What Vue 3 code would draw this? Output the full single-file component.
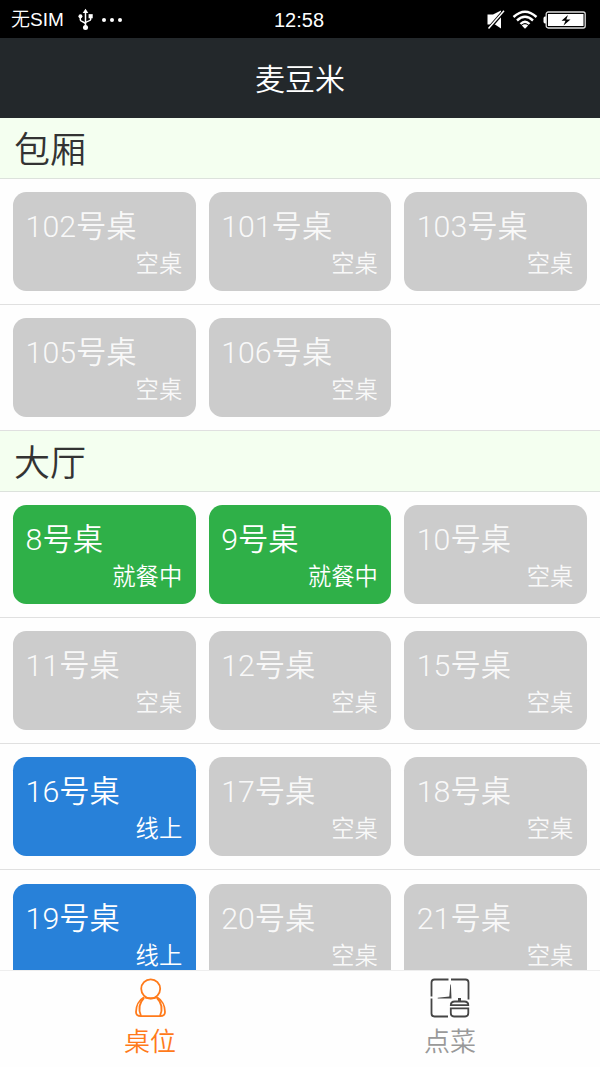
<template>
  <div class="app">
    <div class="status-bar">
      <div class="status-left">
        <span class="sim">无SIM</span>
        <svg class="usb" viewBox="0 0 16 24">
          <path d="M8 3v17M2.500 9v3.500c0 2 5.500 2 5.500 4.500M13.500 8v4c0 2-5.500 1.500-5.500 4" fill="none" stroke="#fff" stroke-width="1.600" />
          <path d="M8 .5l3 4.500H5z" fill="#fff" />
          <circle cx="2.600" cy="8.500" r="2.100" fill="#fff" />
          <path d="M11.300 6.300h4.400v4.400h-4.400z" fill="#fff" />
          <circle cx="8" cy="20.500" r="2.700" fill="#fff" />
        </svg>
        <span class="dots"><i></i><i></i><i></i></span>
      </div>
      <span class="clock">12:58</span>
      <div class="status-right">
        <svg class="mute" viewBox="0 0 18 20">
          <path d="M.5 4.500H6l8-4v18l-6-4H.5z" fill="#fff" />
          <path d="M1.500 19L17.500 .5" stroke="#000" stroke-width="3.600" />
          <path d="M1.500 18.500L17 .8" stroke="#fff" stroke-width="1.500" />
        </svg>
        <svg class="wifi" viewBox="0 0 26 19">
          <g fill="none" stroke="#fff" stroke-width="2.400">
            <path d="M1.500 7Q13-3.500 24.500 7" />
            <path d="M5 10.500Q13 3 21 10.500" />
            <path d="M8.500 14Q13 9.500 17.500 14" />
          </g>
          <path d="M9.800 15.500Q13 12.800 16.200 15.500L13 18.700z" fill="#fff" />
        </svg>
        <svg class="battery" viewBox="0 0 44 18">
          <path d="M3 5.500H2Q.5 5.500.5 7.500v3Q.5 12.500 2 12.500h1z" fill="#fff" />
          <rect x="3.200" y="1" width="39" height="16" rx="2" fill="none" stroke="#ddd" stroke-width="1.300" />
          <rect x="5" y="3" width="35.500" height="12" fill="#fff" />
          <path d="M25 4l-6.500 5.700h4L20.500 14.500l7-6h-4.200z" fill="#000" />
        </svg>
      </div>
    </div>

    <header class="header">麦豆米</header>

    <main class="content">
      <section v-for="area in areas" :key="area.name">
        <h2 class="area-title">{{ area.name }}</h2>
        <div v-for="(row, index) in area.rows" :key="index" class="row">
          <div v-for="table in row" :key="table.no" class="table-card" :class="table.status">
            <div class="table-name"><span class="table-no">{{ table.no }}</span>号桌</div>
            <div class="table-status">{{ statusText[table.status] }}</div>
          </div>
        </div>
      </section>
    </main>

    <nav class="tab-bar">
      <div class="tab" :class="{ active: current === 'table' }" @click="current = 'table'">
        <svg class="tab-icon" viewBox="0 0 40 40" fill="none" stroke="currentColor" stroke-width="1.800">
          <circle cx="20.700" cy="10.800" r="9.500" />
          <path d="M14 19.300C9 22 6 28 6 34c0 3 2 4.200 5 4.200h19c3 0 5-1.200 5-4.200 0-6-3-12-8-14.700" />
          <path d="M14.500 19.500Q20.700 21.500 27 19.500" />
          <path d="M14 20C8.500 25.500 8.500 32 11 38M27 20C32.500 25.500 32.500 32 30 38" />
        </svg>
        <span>桌位</span>
      </div>
      <div class="tab" :class="{ active: current === 'order' }" @click="current = 'order'">
        <svg class="tab-icon" viewBox="0 0 40 40" fill="none" stroke="#444" stroke-width="1.800">
          <path d="M1.500 18.500V4.500q0-3 3-3H18.500M21 1.500h14.500q3 0 3 3v17M1.500 20.500v15q0 3 3 3H18" />
          <path d="M20.300 6.500h.6l.6 14H7.700v-.7l11.600-1.300z" fill="#444" stroke="none" />
          <path d="M28 20h3v3h-3z" fill="#444" stroke="none" />
          <path d="M20.800 27.200q0-3.700 4-3.700h9.500q4 0 4 3.700z" />
          <path d="M20.800 30.300h17.500v5q0 3.200-3.200 3.200H24q-3.200 0-3.200-3.200z" />
        </svg>
        <span>点菜</span>
      </div>
    </nav>
  </div>
</template>

<script setup>
import { ref } from 'vue'

const current = ref('table')

const statusText = {
  empty: '空桌',
  dining: '就餐中',
  online: '线上'
}

const areas = ref([
  {
    name: '包厢',
    rows: [
      [
        { no: 102, status: 'empty' },
        { no: 101, status: 'empty' },
        { no: 103, status: 'empty' }
      ],
      [
        { no: 105, status: 'empty' },
        { no: 106, status: 'empty' }
      ]
    ]
  },
  {
    name: '大厅',
    rows: [
      [
        { no: 8, status: 'dining' },
        { no: 9, status: 'dining' },
        { no: 10, status: 'empty' }
      ],
      [
        { no: 11, status: 'empty' },
        { no: 12, status: 'empty' },
        { no: 15, status: 'empty' }
      ],
      [
        { no: 16, status: 'online' },
        { no: 17, status: 'empty' },
        { no: 18, status: 'empty' }
      ],
      [
        { no: 19, status: 'online' },
        { no: 20, status: 'empty' },
        { no: 21, status: 'empty' }
      ]
    ]
  }
])
</script>

<style>
body {
  margin: 0;
}
</style>

<style scoped>
.app {
  height: 1067px;
  display: flex;
  flex-direction: column;
  overflow: hidden;
  background: #fefefe;
  font-family: Roboto, "Noto Sans CJK SC", sans-serif;
  font-weight: 350;
}

.status-bar {
  height: 38px;
  flex-shrink: 0;
  box-sizing: border-box;
  padding: 0 13px 0 11px;
  display: grid;
  grid-template-columns: 1fr auto 1fr;
  align-items: center;
  background: #000;
  color: #fff;
  font-family: "Liberation Sans", "Noto Sans CJK SC", sans-serif;
  font-size: 20px;
  font-weight: 350;
  line-height: 38px;
}

.status-left,
.status-right {
  display: flex;
  align-items: center;
}

.status-right {
  justify-content: flex-end;
}

.clock {
  line-height: 40px;
}

.sim {
  font-size: 19px;
  line-height: 40px;
}

.usb {
  width: 15px;
  height: 23px;
  margin-left: 14px;
}

.dots {
  display: flex;
  gap: 4px;
  margin-left: 9px;
}

.dots i {
  width: 4px;
  height: 4px;
  border-radius: 50%;
  background: #fff;
}

.mute {
  width: 18px;
  height: 20px;
}

.wifi {
  width: 26px;
  height: 19px;
  margin-left: 7px;
}

.battery {
  width: 44px;
  height: 18px;
  margin-left: 5px;
}

.status-left svg,
.status-left .dots,
.status-right svg {
  margin-top: -1px;
}

.header {
  height: 80px;
  flex-shrink: 0;
  background: #23282b;
  color: #fff;
  font-size: 30px;
  line-height: 84px;
  text-align: center;
}

.content {
  flex: 1;
  min-height: 0;
  overflow: hidden;
}

.area-title {
  height: 60.700px;
  box-sizing: border-box;
  margin: 0;
  padding-left: 14px;
  border-bottom: 1px solid #dce2dc;
  background: #f4fff0;
  color: #333;
  font-size: 36px;
  font-weight: 350;
  line-height: 66px;
}

.row {
  height: 126.200px;
  box-sizing: border-box;
  padding: 13.300px;
  display: grid;
  grid-template-columns: repeat(3, 1fr);
  gap: 13.400px;
  border-bottom: 1px solid #e0e0e0;
}

.table-card {
  box-sizing: border-box;
  height: 98.700px;
  padding: 13px 13.300px;
  border-radius: 13.300px;
  background: #ccc;
  color: #fff;
}

.table-card.empty {
  color: rgba(255, 255, 255, 0.9);
}

.table-card.dining {
  background: #2fb048;
}

.table-card.online {
  background: #2881d9;
}

.table-name {
  margin-left: -1px;
  font-size: 30.300px;
  line-height: 43px;
}

.table-no {
  font-weight: 300;
}

.table-status {
  font-size: 23.300px;
  line-height: 32px;
  text-align: right;
}

.tab-bar {
  height: 97.500px;
  flex-shrink: 0;
  box-sizing: border-box;
  display: flex;
  border-top: 1px solid #eee;
  background: #fefefe;
}

.tab {
  flex: 1;
  display: flex;
  flex-direction: column;
  align-items: center;
  padding-top: 7.500px;
  color: #999;
  font-size: 26px;
  line-height: 48px;
}

.tab.active {
  color: #ff7a1a;
}

.tab-icon {
  width: 40px;
  height: 40px;
}
</style>
